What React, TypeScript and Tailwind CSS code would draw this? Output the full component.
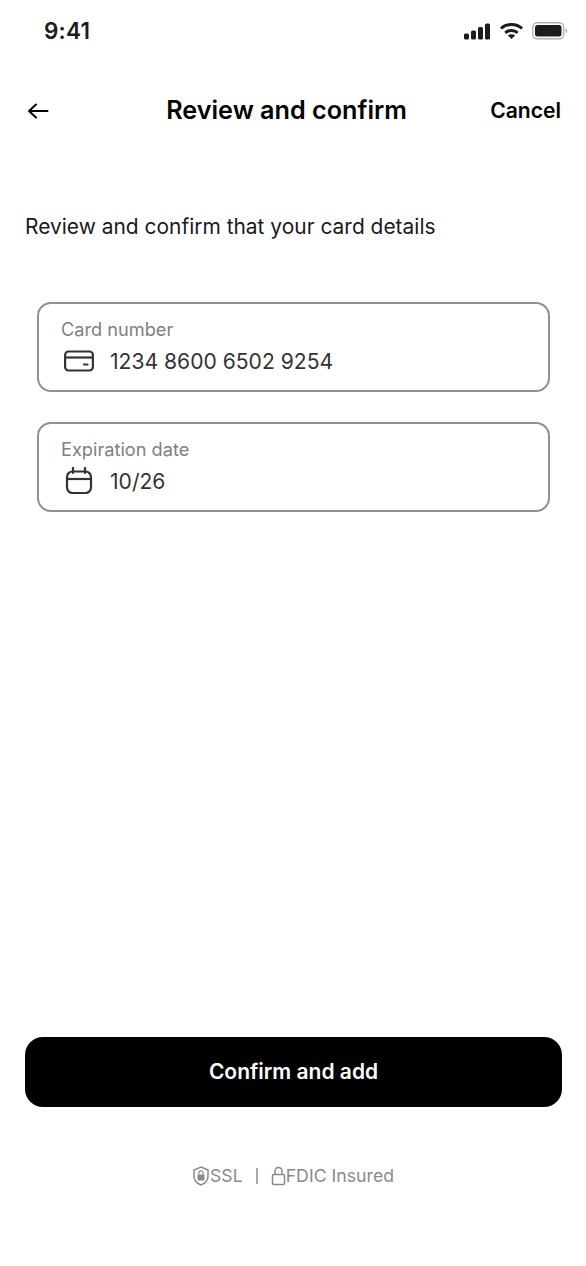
const inter = { fontFamily: 'Inter, sans-serif' }

function StatusIcons() {
  return (
    <div className="flex items-center gap-[8px]">
      <svg width="27" height="17" viewBox="0 0 27 17" fill="#1c1c1e">
        <rect x="0" y="10.5" width="5" height="6" rx="1.5" />
        <rect x="7" y="7.500" width="5" height="9" rx="1.5" />
        <rect x="14" y="4" width="5" height="12.500" rx="1.5" />
        <rect x="21" y="0.500" width="5" height="16" rx="1.5" />
      </svg>
      <svg width="25" height="18" viewBox="0 0 24 18" fill="none" stroke="#1c1c1e" strokeWidth="3">
        <path d="M1.500 6.500C7.300 1.200 16.700 1.200 22.500 6.500" />
        <path d="M5.800 10.800c3.500-3.100 8.900-3.100 12.400 0" />
        <path d="M12 17l-3.600-3.600c2-1.500 5.200-1.500 7.200 0z" fill="#1c1c1e" stroke="none" />
      </svg>
      <svg width="36" height="18" viewBox="0 0 36 18" fill="none">
        <rect x="0.800" y="0.800" width="31" height="16" rx="4.500" stroke="#b0b0b2" strokeWidth="1.400" />
        <rect x="3" y="3" width="26.500" height="11.600" rx="2.500" fill="#1c1c1e" />
        <path d="M33.600 6.300c1 .4 1.600 1.400 1.600 2.500s-.6 2.100-1.600 2.500z" fill="#b0b0b2" />
      </svg>
    </div>
  )
}

function CardIcon() {
  return (
    <svg width="30" height="22" viewBox="0 0 30 22" fill="none" stroke="#333333" strokeWidth="2.2">
      <rect x="1.100" y="1.500" width="27.800" height="19" rx="3.500" />
      <path d="M1 7.500h28" />
      <path d="M20 14.500h3.500" strokeLinecap="round" />
    </svg>
  )
}

function CalendarIcon() {
  return (
    <svg width="28" height="28" viewBox="0 0 28 28" fill="none" stroke="#333333" strokeWidth="2.2">
      <rect x="2" y="4.500" width="24" height="21.500" rx="5.500" />
      <path d="M2 12h24" />
      <path d="M8 1v5M20 1v5" strokeLinecap="round" />
    </svg>
  )
}

function Field({ label, value, icon }: { label: string; value: string; icon: React.ReactNode }) {
  return (
    <div className="h-[90px] rounded-[14px] border-2 border-[#909090] pl-[22px] pt-[13px]">
      <div className="text-[18.200px] leading-[24px] text-[#808080]">{label}</div>
      <div className="mt-[4px] flex h-[32px] items-center gap-[15px]">
        <div className="flex w-[34px] justify-center pl-[1px]">{icon}</div>
        <div className="pt-[1px] text-[21.100px] leading-[32px] text-[#333333]">{value}</div>
      </div>
    </div>
  )
}

export default function App() {
  return (
    <div className="flex h-[1266px] w-[586px] flex-col bg-white" style={inter}>
      <div className="flex h-[62px] items-center justify-between pl-[44px] pr-[18px]">
        <div className="text-[22.500px] font-[580] tracking-[0.2px] text-[#1c1c1e]">9:41</div>
        <StatusIcons />
      </div>

      <div className="mt-[20px] flex h-[58px] items-center justify-between pl-[25px] pr-[25px]">
        <button className="flex w-[26px] justify-center" aria-label="Back">
          <svg width="22" height="18" viewBox="0 0 22 18" fill="none" stroke="#000000" strokeWidth="2" strokeLinecap="round" strokeLinejoin="round">
            <path d="M20.500 9H2M9 2.500L2 9l7 6.500" />
          </svg>
        </button>
        <div className="ml-[32px] pb-[1px] text-[25.200px] font-[580] text-black">Review and confirm</div>
        <button className="pb-[1px] text-[21.100px] font-[580] text-black">Cancel</button>
      </div>

      <div className="mt-[71px] pl-[25px] text-[20.950px] leading-[32px] text-[#1a1a1a]">
        Review and confirm that your card details
      </div>

      <div className="mt-[59px] flex flex-col gap-[30px] pl-[37px] pr-[36px]">
        <Field label="Card number" value="1234 8600 6502 9254" icon={<CardIcon />} />
        <Field label="Expiration date" value="10/26" icon={<CalendarIcon />} />
      </div>

      <div className="flex-1" />

      <div className="pl-[25px] pr-[24px]">
        <button className="h-[70px] w-full rounded-[18px] bg-black text-[21px] font-semibold text-white">
          Confirm and add
        </button>
      </div>

      <div className="mb-[78px] mt-[57px] flex h-[24px] items-center justify-center text-[17.700px] text-[#8a8a8a]">
        <svg width="18" height="20" viewBox="0 0 18 20" fill="none" stroke="#8a8a8a" strokeWidth="1.500">
          <path d="M9 1l7 3v6.500c0 3.800-3 6.800-7 8.500-4-1.700-7-4.700-7-8.500V4z" />
          <rect x="5.500" y="8.500" width="7" height="6" rx="1" fill="#8a8a8a" stroke="none" />
          <path d="M6.800 8.500V7a2.200 2.200 0 0 1 4.400 0v1.500" strokeWidth="1.200" />
        </svg>
        <span>SSL</span>
        <div className="mx-[13px] h-[16px] w-[2px] bg-[#a8a8a8]" />
        <svg width="15" height="20" viewBox="0 0 15 20" fill="none" stroke="#8a8a8a" strokeWidth="1.500">
          <rect x="1.500" y="8.500" width="12" height="10" rx="1.500" />
          <path d="M4 8.500V5a3.500 3.500 0 0 1 7 0v3.500" />
        </svg>
        <span>FDIC Insured</span>
      </div>
    </div>
  )
}
